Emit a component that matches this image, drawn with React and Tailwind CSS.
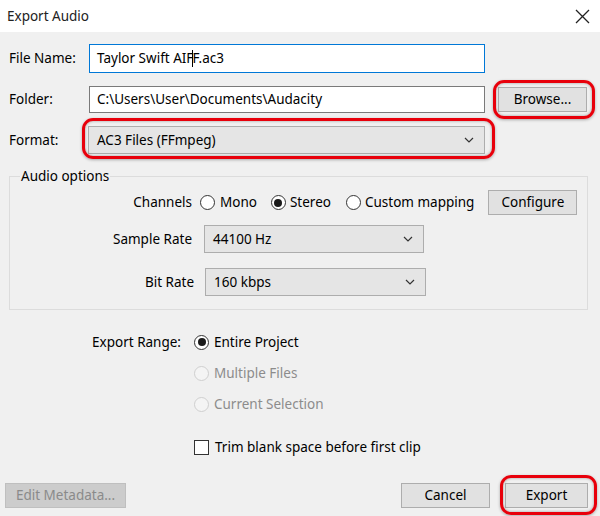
import React from "react";

const font = { fontFamily: '"Noto Sans", "Open Sans", sans-serif' };

const Chevron = () => (
  <svg width="10" height="6" viewBox="0 0 10 6" className="shrink-0">
    <path d="M1 1 L5 5 L9 1" fill="none" stroke="#333" strokeWidth="1.2" />
  </svg>
);

const Radio = ({ checked, disabled }) => (
  <span
    className={`w-[15px] h-[15px] rounded-full border flex items-center justify-center shrink-0 ${
      disabled ? "border-[#cfcfcf] bg-[#f4f4f4]" : "border-[#333] bg-white"
    }`}
  >
    {checked && <span className="w-[8px] h-[8px] rounded-full bg-[#1a1a1a]" />}
  </span>
);

const RedRing = ({ className }) => (
  <span
    className={`absolute border-[3px] border-[#e8000b] rounded-[11px] shadow-[inset_0_0_3px_rgba(0,0,0,0.35),0_1px_3px_rgba(0,0,0,0.3)] pointer-events-none ${className}`}
  />
);

const Button = ({ children, className = "", disabled }) => (
  <div
    className={`h-[25px] flex items-center justify-center border ${
      disabled
        ? "bg-[#cccccc] border-[#bfbfbf] text-[#8a8a8a]"
        : "bg-[#e1e1e1] border-[#adadad] text-black"
    } ${className}`}
  >
    {children}
  </div>
);

const Select = ({ value, className = "" }) => (
  <div
    className={`h-[28px] flex items-center justify-between bg-[#e5e5e5] border border-[#adadad] pl-[8px] pr-[10px] ${className}`}
  >
    <span>{value}</span>
    <Chevron />
  </div>
);

export default function App() {
  return (
    <div
      className="w-[600px] h-[516px] bg-[#f0f0f0] flex flex-col text-[13.5px] text-black overflow-hidden"
      style={font}
    >
      {/* Title bar */}
      <div className="h-[32px] bg-white flex items-center justify-between pl-[7px] pr-[10px] shrink-0">
        <span className="text-[13.5px] text-[#222]">Export Audio</span>
        <svg width="15" height="15" viewBox="0 0 15 15">
          <path d="M1 1 L14 14 M14 1 L1 14" stroke="#222" strokeWidth="1.3" />
        </svg>
      </div>

      {/* File name */}
      <div className="flex items-center mt-[12px] pl-[9px] h-[29px]">
        <span className="w-[80px]">File Name:</span>
        <div className="w-[396px] h-[29px] bg-white border border-[#0078d7] flex items-center pl-[7px]">
          Taylor Swift AIF
          <span className="w-px h-[17px] bg-black -mx-px" />
          F.ac3
        </div>
      </div>

      {/* Folder */}
      <div className="flex items-center mt-[13px] pl-[9px] h-[27px]">
        <span className="w-[80px]">Folder:</span>
        <div className="w-[396px] h-[27px] bg-white border border-[#7a7a7a] flex items-center pl-[7px]">
          C:\Users\User\Documents\Audacity
        </div>
        <div className="relative ml-[13px]">
          <Button className="w-[89px]">Browse...</Button>
          <RedRing className="-left-[5px] -right-[8px] -top-[7px] -bottom-[7px]" />
        </div>
      </div>

      {/* Format */}
      <div className="flex items-center mt-[13px] pl-[9px] h-[28px]">
        <span className="w-[79px]">Format:</span>
        <div className="relative">
          <Select value="AC3 Files (FFmpeg)" className="w-[397px]" />
          <RedRing className="-left-[6px] -right-[10px] -top-[8px] -bottom-[5px]" />
        </div>
      </div>

      {/* Audio options */}
      <fieldset className="mt-[12px] ml-[9px] w-[579px] h-[144px] border border-[#dcdcdc] pt-[4px]">
        <legend className="ml-[10px] px-px leading-[20px]">Audio options</legend>
        <div className="grid grid-cols-[182px_1fr] gap-x-[8px] items-center">
          <span className="text-right">Channels</span>
          <div className="flex items-center h-[25px]">
            <Radio />
            <span className="ml-[5px]">Mono</span>
            <span className="ml-[14px]"><Radio checked /></span>
            <span className="ml-[4px]">Stereo</span>
            <span className="ml-[15px]"><Radio /></span>
            <span className="ml-[4px]">Custom mapping</span>
            <Button className="w-[89px] ml-[14px]">Configure</Button>
          </div>
        </div>
        <div className="grid grid-cols-[182px_1fr] gap-x-[12px] items-center mt-[10px]">
          <span className="text-right">Sample Rate</span>
          <Select value="44100 Hz" className="w-[220px]" />
        </div>
        <div className="grid grid-cols-[184px_1fr] gap-x-[11px] items-center mt-[15px]">
          <span className="text-right">Bit Rate</span>
          <Select value="160 kbps" className="w-[221px]" />
        </div>
      </fieldset>

      {/* Export range */}
      <div className="grid grid-cols-[181px_1fr] gap-x-[13px] mt-[22px]">
        <span className="text-right leading-[20px]">Export Range:</span>
        <div className="flex flex-col gap-y-[11px]">
          <div className="flex items-center h-[20px]">
            <Radio checked />
            <span className="ml-[5px]">Entire Project</span>
          </div>
          <div className="flex items-center h-[20px] text-[#8c8c8c]">
            <Radio disabled />
            <span className="ml-[5px]">Multiple Files</span>
          </div>
          <div className="flex items-center h-[20px] text-[#8c8c8c]">
            <Radio disabled />
            <span className="ml-[5px]">Current Selection</span>
          </div>
          <div className="flex items-center h-[20px] mt-[12px]">
            <span className="w-[15px] h-[15px] border border-[#333] bg-white shrink-0" />
            <span className="ml-[6px]">Trim blank space before first clip</span>
          </div>
        </div>
      </div>

      {/* Bottom buttons */}
      <div className="flex items-center mt-auto mb-[8px] pl-[5px]">
        <Button disabled className="w-[121px]">Edit Metadata...</Button>
        <Button className="w-[89px] ml-auto">Cancel</Button>
        <div className="relative ml-[15px] mr-[12px]">
          <Button className="w-[83px]">Export</Button>
          <RedRing className="-left-[5px] -right-[9px] -top-[8px] -bottom-[7px]" />
        </div>
      </div>
    </div>
  );
}
